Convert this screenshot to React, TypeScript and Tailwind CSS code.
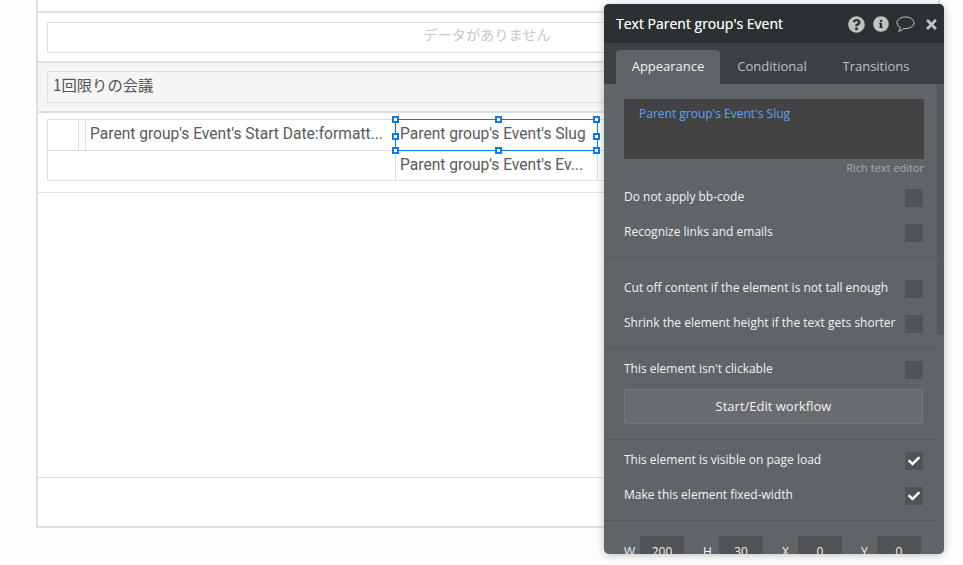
import { FaQuestionCircle, FaInfoCircle, FaTimes, FaCheck } from "react-icons/fa";

function Check({ on }: { on?: boolean }) {
  return (
    <div className="w-[18px] h-[18px] bg-[#505457] flex items-center justify-center text-white shrink-0">
      {on ? <FaCheck className="text-[12px]" /> : null}
    </div>
  );
}

function Row({ label, on, mt }: { label: string; on?: boolean; mt: string }) {
  return (
    <div className={`flex items-center justify-between h-[18px] ${mt}`}>
      <span className="text-[12px] leading-[18px] -mt-[2px] text-[#f2f2f2] whitespace-nowrap">{label}</span>
      <Check on={on} />
    </div>
  );
}

function Handle({ cls }: { cls: string }) {
  return <div className={`absolute w-[7px] h-[7px] bg-white border-2 border-[#0d7bea] ${cls}`} />;
}

function Dim({ l, v }: { l: string; v: string }) {
  return (
    <div className="flex items-start w-[79px] shrink-0">
      <span className="w-[16px] text-[12px] leading-[18px] mt-[7px] text-[#f2f2f2]">{l}</span>
      <div className="w-[44px] h-[30px] bg-[#505457] text-center text-[12px] leading-[18px] pt-[7px] text-[#f2f2f2]">{v}</div>
    </div>
  );
}

export default function App() {
  return (
    <div className="relative w-[963px] h-[565px] overflow-hidden bg-[#fdfdfd] font-['Roboto',sans-serif]">
      <div className="ml-[36px] w-[904px] h-[528px] border-l-2 border-r-2 border-b-2 border-[#dedede] bg-white flex flex-col">
        <div className="h-[13px] border-b-2 border-[#dedede] shrink-0" />
        <div className="h-[50px] border-b-2 border-[#dedede] shrink-0 pl-[9px] pt-[9px]">
          <div className="h-[31px] w-[880px] border border-[#dedede] flex justify-center items-center pb-[6px] text-[14.2px] text-[#c8c8c8] font-['Noto_Sans_CJK_JP',sans-serif]">
            データがありません
          </div>
        </div>
        <div className="h-[50px] border-b-2 border-[#dedede] bg-[#f5f5f5] shrink-0 pl-[9px] pt-[8px]">
          <div className="h-[32px] w-[880px] border border-[#dedede] flex items-center pl-[5px] pb-[6px] text-[15.3px] text-[#555] font-['Noto_Sans_CJK_JP',sans-serif]">
            1回限りの会議
          </div>
        </div>
        <div className="h-[80px] border-b border-[#dedede] shrink-0 pl-[9px] pt-[6px]">
          <div className="w-[880px] h-[62px] border border-[#dedede] relative text-[15.6px] text-[#5a5a5a] leading-[28px]">
            <div className="flex h-[31px] border-b border-[#dedede]">
              <div className="w-[31px] border-r border-[#dedede]" />
              <div className="w-[7px] border-r border-[#dedede]" />
              <div className="w-[310px] border-r border-[#dedede] pl-[4px] whitespace-nowrap">Parent group's Event's Start Date:formatt...</div>
              <div className="w-[202px] border-r border-[#dedede] pl-[4px] whitespace-nowrap">Parent group's Event's Slug</div>
            </div>
            <div className="flex h-[29px]">
              <div className="w-[348px] border-r border-[#dedede] shrink-0" />
              <div className="w-[202px] border-r border-[#dedede] pl-[4px] whitespace-nowrap">Parent group's Event's Ev...</div>
            </div>
            <div className="absolute left-[347px] top-[-1px] w-[203px] h-[32px] border border-[#0d7bea] pointer-events-none">
              <Handle cls="-left-[4px] -top-[4px]" />
              <Handle cls="left-[99px] -top-[4px]" />
              <Handle cls="-right-[3px] -top-[4px]" />
              <Handle cls="-left-[4px] top-[13px]" />
              <Handle cls="-right-[3px] top-[13px]" />
              <Handle cls="-left-[4px] -bottom-[4px]" />
              <Handle cls="left-[99px] -bottom-[4px]" />
              <Handle cls="-right-[3px] -bottom-[4px]" />
            </div>
          </div>
        </div>
        <div className="h-[285px] border-b border-[#dedede] shrink-0" />
      </div>

      <div className="absolute left-[604px] top-[4px] w-[340px] h-[550px] rounded-[5px] overflow-hidden bg-[#5f6468] shadow-[0_1px_8px_rgba(0,0,0,0.25)] font-['Open_Sans',sans-serif] flex flex-col">
        <div className="h-[39px] bg-[#2b3133] flex items-center justify-between pl-[12px] pr-[5px] pt-px shrink-0">
          <span className="text-[14px] -mt-[2px] text-[#f2f2f2] [text-shadow:0_0_0.4px_#f2f2f2]">Text Parent group's Event</span>
          <div className="flex items-center text-[#bfc2c3]">
            <FaQuestionCircle className="text-[17px]" />
            <FaInfoCircle className="text-[16px] ml-[8px]" />
            <svg width="19" height="17" viewBox="0 0 19 17" className="ml-[7px]" fill="none" stroke="#c6c9ca" strokeWidth="1">
              <path d="M9.5 1C4.8 1 1 3.5 1 6.8c0 2 1.4 3.6 3.500 4.600-.2 1.300-.9 2.700-1.900 3.800 2-.3 3.800-1.300 5.200-2.700.5 0 1.100.1 1.700.1 4.700 0 8.500-2.600 8.500-5.800S14.200 1 9.500 1z" />
            </svg>
            <FaTimes className="text-[15px] ml-[9px]" />
          </div>
        </div>
        <div className="h-[41px] bg-[#3b4043] flex items-end pl-[12px] shrink-0 text-[13px] text-[#bfc1c2]">
          <div className="w-[104px] h-[34px] bg-[#5f6468] rounded-t-[4px] flex items-center justify-center text-[#f2f2f2]">Appearance</div>
          <div className="w-[104px] h-[34px] flex items-center justify-center">Conditional</div>
          <div className="w-[104px] h-[34px] flex items-center justify-center">Transitions</div>
        </div>
        <div className="relative flex-1 overflow-hidden">
          <div className="absolute right-0 top-0 w-[7px] h-[251px] bg-[#55595c]" />
          <div className="w-[333px]">
            <div className="pl-[20px] pr-[14px] pt-[15px] pb-[15px] border-b border-[#54585b]">
              <div className="h-[60px] w-[300px] bg-[#434343] pl-[15px] pt-[6px] text-[12px] leading-[18px] text-[#5ea2f5]">Parent group's Event's Slug</div>
              <div className="text-right text-[11px] leading-[18px] text-[#a9abac] w-[300px]">Rich text editor</div>
              <Row label="Do not apply bb-code" mt="mt-[12px]" />
              <Row label="Recognize links and emails" mt="mt-[17px]" />
            </div>
            <div className="pl-[20px] pr-[14px] pt-[22px] pb-[15px] border-b border-[#54585b]">
              <Row label="Cut off content if the element is not tall enough" mt="" />
              <Row label="Shrink the element height if the text gets shorter" mt="mt-[17px]" />
            </div>
            <div className="pl-[20px] pr-[14px] pt-[12px] pb-[15px] border-b border-[#54585b]">
              <Row label="This element isn't clickable" mt="" />
              <div className="mt-[10px] h-[35px] w-[299px] bg-[#686c6e] border border-[#74787a] rounded-[2px] flex items-center justify-center text-[13px] text-[#f2f2f2]">Start/Edit workflow</div>
            </div>
            <div className="pl-[20px] pr-[14px] pt-[12px] pb-[15px] border-b border-[#54585b]">
              <Row label="This element is visible on page load" on mt="" />
              <Row label="Make this element fixed-width" on mt="mt-[17px]" />
            </div>
            <div className="pl-[20px] pt-[15px] flex">
              <Dim l="W" v="200" />
              <Dim l="H" v="30" />
              <Dim l="X" v="0" />
              <Dim l="Y" v="0" />
            </div>
          </div>
        </div>
      </div>
    </div>
  );
}
